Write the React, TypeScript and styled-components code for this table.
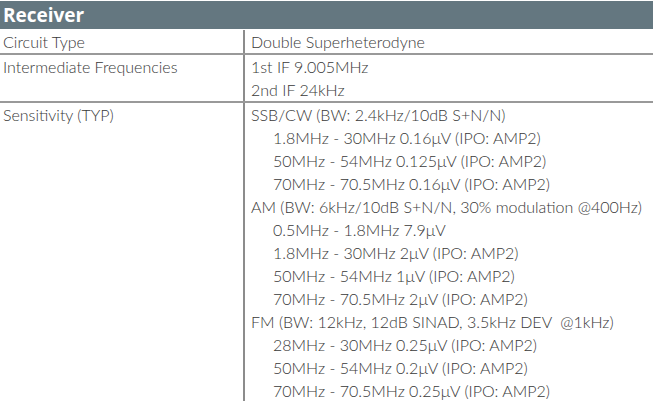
import React from 'react';
import styled, { createGlobalStyle } from 'styled-components';

const GlobalStyle = createGlobalStyle`
  body {
    margin: 0;
    background: #ffffff;
    font-family: 'Lato', 'Liberation Sans', sans-serif;
    color: #383838;
  }
`;

const Table = styled.div`
  width: 653px;
  padding-top: 1px;
`;

const Header = styled.div`
  height: 28px;
  background: #647780;
  color: #ffffff;
  font-family: 'Open Sans', 'Liberation Sans', sans-serif;
  font-weight: 700;
  font-size: 19px;
  line-height: 28px;
  padding-left: 3px;
`;

const Row = styled.div<{ $first?: boolean }>`
  display: grid;
  grid-template-columns: 245px 1fr;
  border-top: ${(p) => (p.$first ? 'none' : '2px solid #999999')};
  padding-top: ${(p) => (p.$first ? '1px' : '0')};
`;

const Label = styled.div`
  border-right: 2px solid #8c8c8c;
  padding-left: 3px;
  font-size: 16px;
  line-height: 23px;
  font-weight: 300;
`;

const Values = styled.div`
  padding-left: 6px;
`;

const Line = styled.div<{ $indent?: boolean }>`
  font-size: 16px;
  font-weight: 300;
  line-height: 23px;
  padding-left: ${(p) => (p.$indent ? '22px' : '0')};
  white-space: pre;
`;

type Item = { text: string; indent?: boolean };

const rows: { label: string; items: Item[] }[] = [
  { label: 'Circuit Type', items: [{ text: 'Double Superheterodyne' }] },
  {
    label: 'Intermediate Frequencies',
    items: [{ text: '1st IF 9.005MHz' }, { text: '2nd IF 24kHz' }],
  },
  {
    label: 'Sensitivity (TYP)',
    items: [
      { text: 'SSB/CW (BW: 2.4kHz/10dB S+N/N)' },
      { text: '1.8MHz - 30MHz 0.16μV (IPO: AMP2)', indent: true },
      { text: '50MHz - 54MHz 0.125μV (IPO: AMP2)', indent: true },
      { text: '70MHz - 70.5MHz 0.16μV (IPO: AMP2)', indent: true },
      { text: 'AM (BW: 6kHz/10dB S+N/N, 30% modulation @400Hz)' },
      { text: '0.5MHz - 1.8MHz 7.9μV', indent: true },
      { text: '1.8MHz - 30MHz 2μV (IPO: AMP2)', indent: true },
      { text: '50MHz - 54MHz 1μV (IPO: AMP2)', indent: true },
      { text: '70MHz - 70.5MHz 2μV (IPO: AMP2)', indent: true },
      { text: 'FM (BW: 12kHz, 12dB SINAD, 3.5kHz DEV  @1kHz)' },
      { text: '28MHz - 30MHz 0.25μV (IPO: AMP2)', indent: true },
      { text: '50MHz - 54MHz 0.2μV (IPO: AMP2)', indent: true },
      { text: '70MHz - 70.5MHz 0.25μV (IPO: AMP2)', indent: true },
    ],
  },
];

export default function App() {
  return (
    <>
      <GlobalStyle />
      <Table>
        <Header>Receiver</Header>
        {rows.map((row, i) => (
          <Row key={row.label} $first={i === 0}>
            <Label>{row.label}</Label>
            <Values>
              {row.items.map((item) => (
                <Line key={item.text} $indent={item.indent}>
                  {item.text}
                </Line>
              ))}
            </Values>
          </Row>
        ))}
      </Table>
    </>
  );
}
